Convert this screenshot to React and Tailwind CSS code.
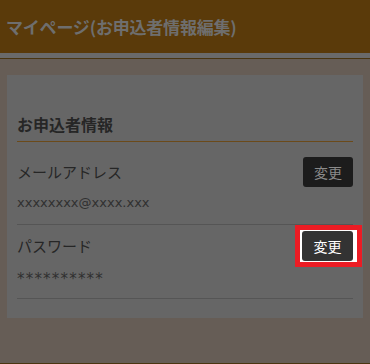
const font = { fontFamily: '"Noto Sans CJK JP", "Noto Sans", sans-serif' };
const latin = { fontFamily: '"DejaVu Sans", "Noto Sans CJK JP", sans-serif' };

const App = () => {
  return (
    <div className="min-h-screen bg-[#665d56]" style={font}>
      {/* Header */}
      <header className="h-[53px] bg-[#5a3a0a] flex items-center px-[6px]">
        <h1 className="text-[17px] font-bold text-[#6e6e6e] tracking-[-0.2px]">マイページ(お申込者情報編集)</h1>
      </header>
      <div className="h-[5px] bg-[#6a6a6a]" />
      <div className="h-px bg-[#4a3510]" />

      {/* Body */}
      <main className="h-[304px] pt-4 px-[7px]">
        <section className="bg-[#666666] px-[10px] pt-[37px] h-[243px]">
          <h2 className="text-[16px] leading-6 font-bold text-[#262626] pb-[5px] border-b border-[#6b4a1a]">
            お申込者情報
          </h2>

          <div className="border-b border-[#555555] pt-[15px] pb-[11px]">
            <div className="flex items-center justify-between">
              <span className="text-[15px] text-[#262626]">メールアドレス</span>
              <button className="w-[50px] h-[30px] rounded-[3px] bg-[#1c1c1c] text-[14px] text-[#8a8a8a]">変更</button>
            </div>
            <p className="text-[13px] leading-5 text-[#303030] mt-[6px]" style={latin}>xxxxxxxx@xxxx.xxx</p>
          </div>

          <div className="border-b border-[#555555] pt-[6px] pb-[9px]">
            <div className="flex items-center justify-between">
              <span className="text-[15px] text-[#262626]">パスワード</span>
              <div className="relative">
                <span className="absolute -left-[7px] -right-[9px] -top-[6px] -bottom-[6px] border-[5px] border-[#ec1c24] bg-white" />
                <button className="relative w-[51px] h-[30px] rounded-[3px] bg-[#333333] text-[14px] text-white">変更</button>
              </div>
            </div>
            <p className="text-[15px] leading-5 text-[#303030] mt-[8px] tracking-[1.2px]" style={latin}>**********</p>
          </div>
        </section>
      </main>
      <div className="h-px bg-[#4a3510]" />
    </div>
  );
};

export default App;
